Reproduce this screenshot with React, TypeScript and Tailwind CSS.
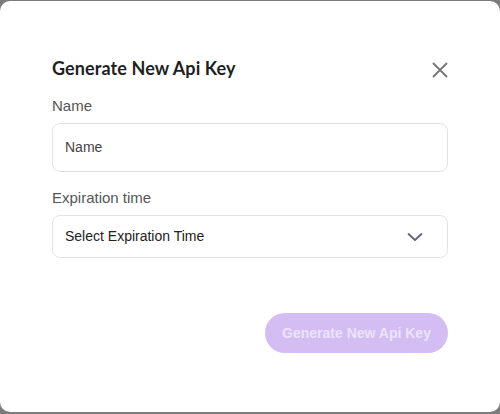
import React from "react";

export default function App() {
  return (
    <div className="w-[500px] h-[414px] bg-[#7b7b7b] pt-px overflow-hidden" style={{ fontFamily: '"Liberation Sans", Arial, sans-serif' }}>
      <div className="h-[411px] w-[500px] bg-white rounded-[10px] px-[52px] pt-[55px] flex flex-col">
        <div className="flex items-center justify-between h-[24px]">
          <h2 className="text-[18px] font-bold text-[#1f1f1f] tracking-[0.1px]" style={{ fontFamily: 'Lato, "Liberation Sans", sans-serif' }}>
            Generate New Api Key
          </h2>
          <svg width="16" height="16" viewBox="0 0 16 16" className="mt-[4px]">
            <path d="M1.5 1.5 L14.5 14.5 M14.5 1.5 L1.5 14.5" stroke="#757575" strokeWidth="1.8" strokeLinecap="round" />
          </svg>
        </div>
        <label className="mt-[17px] text-[15px] leading-[18px] text-[#555]">Name</label>
        <div className="mt-[8px] h-[49px] border border-[#e3e3e3] rounded-[8px] flex items-center px-[12px] text-[14px] text-[#444]">
          Name
        </div>
        <label className="mt-[17px] text-[15px] leading-[18px] text-[#555]">Expiration time</label>
        <div className="mt-[8px] h-[43px] border border-[#e3e3e3] rounded-[8px] flex items-center justify-between pl-[12px] pr-[24px] text-[14px] text-[#222]">
          <span>Select Expiration Time</span>
          <svg width="16" height="10" viewBox="0 0 16 10">
            <path d="M1.5 2 L8 8 L14.5 2" stroke="#5d667a" strokeWidth="1.8" fill="none" strokeLinecap="round" strokeLinejoin="round" />
          </svg>
        </div>
        <div className="mt-[55px] flex justify-end">
          <button className="w-[183px] h-[40px] rounded-full bg-[#d4bdf3] text-[14px] font-bold text-[#ede3fb]">
            Generate New Api Key
          </button>
        </div>
      </div>
    </div>
  );
}
